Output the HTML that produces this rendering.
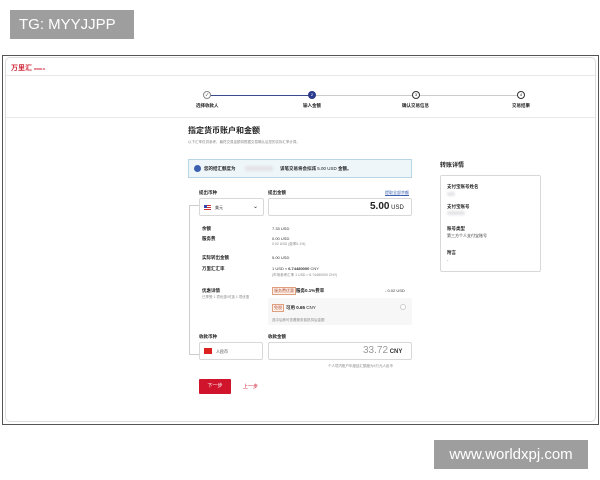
<!DOCTYPE html><html><head><meta charset="utf-8"><style>
*{margin:0;padding:0;box-sizing:border-box}
body{width:600px;height:480px;background:#fff;position:relative;overflow:hidden;font-family:"Liberation Sans","Noto Sans CJK SC",sans-serif;color:#222}
.a{position:absolute;white-space:nowrap}
.s{font-size:4px;color:#333}
.b{font-size:4.5px;font-weight:bold;color:#222}
.g{font-size:3.5px;color:#888}
.box{position:absolute;border:1px solid #d8d8d8;border-radius:2px;background:#fff}
.c{position:absolute;width:8px;height:8px;border-radius:50%;border:1px solid #333;background:#fff;font-size:4px;text-align:center;line-height:6px}
.blur{position:absolute;background:#e4e4e8;border-radius:2px;filter:blur(1px)}
</style></head><body>
<div class="a" style="left:10px;top:10px;width:124px;height:29px;background:#9e9e9e;color:#fff;font-size:15px;line-height:29px;padding-left:9px">TG: MYYJJPP</div>
<div class="a" style="left:434px;top:440px;width:154px;height:29px;background:#9e9e9e;color:#fff;font-size:15px;line-height:29px;text-align:center">www.worldxpj.com</div>
<div class="a" style="left:2px;top:55px;width:597px;height:370px;border:1px solid #555;background:#fff"></div>
<div class="a" style="left:5px;top:57px;width:591px;height:365px;border:1px solid #ddd;border-radius:5px;background:#fff"></div>
<div class="a" style="left:6px;top:75px;width:589px;height:1px;background:#e8e8e8"></div>
<div class="a" style="left:6px;top:117px;width:589px;height:1px;background:#e8e8e8"></div>
<div class="a" style="left:11px;top:63px;font-size:7px;color:#d0293a;font-weight:bold">万里汇 <span style="font-size:3px">WORLD<br></span></div>
<div class="a" style="left:207px;top:95px;width:105px;height:1px;background:#3a4a8c"></div>
<div class="a" style="left:312px;top:95px;width:209px;height:1px;background:#ccc"></div>
<div class="c" style="left:203px;top:91px;border-color:#888">✓</div>
<div class="c" style="left:308px;top:91px;background:#2a3a8c;border-color:#2a3a8c;color:#fff">2</div>
<div class="c" style="left:412px;top:91px">3</div>
<div class="c" style="left:517px;top:91px">4</div>
<div class="a b" style="left:196px;top:103px">选择收款人</div>
<div class="a b" style="left:303px;top:103px">输入金额</div>
<div class="a b" style="left:402px;top:103px">确认交易信息</div>
<div class="a b" style="left:512px;top:103px">交易结果</div>
<div class="a" style="left:188px;top:125px;font-size:8px;font-weight:bold">指定货币账户和金额</div>
<div class="a g" style="left:188px;top:140px">以下汇率仅供参考，最终交易金额将根据交易确认后您的实际汇率计算。</div>
<div class="a" style="left:188px;top:159px;width:224px;height:19px;border:1px solid #b9d6e6;background:#eef6fa"></div>
<div class="a" style="left:194px;top:165px;width:7px;height:7px;border-radius:50%;background:#3a5fb0"></div>
<div class="a b" style="left:204px;top:166px">您的结汇额度为</div>
<div class="blur" style="left:245px;top:166px;width:28px;height:5px"></div>
<div class="a b" style="left:280px;top:166px">该笔交易将会扣减 <span style="font-weight:normal">5.00 USD</span> 金额。</div>
<div class="a" style="left:440px;top:160px;font-size:6px;font-weight:bold">转账详情</div>
<div class="box" style="left:440px;top:175px;width:101px;height:97px"></div>
<div class="a b" style="left:447px;top:184px">支付宝账号姓名</div><div class="blur" style="left:447px;top:192px;width:8px;height:4px"></div>
<div class="a b" style="left:447px;top:204px">支付宝账号</div><div class="blur" style="left:447px;top:211px;width:18px;height:4px"></div>
<div class="a b" style="left:447px;top:226px">账号类型</div><div class="a s" style="left:447px;top:233px">第三方个人支付宝账号</div>
<div class="a b" style="left:447px;top:250px">附言</div><div class="a s" style="left:447px;top:257px">-</div>
<div class="a" style="left:189px;top:205px;width:10px;height:150px;border-left:1px solid #ccc;border-top:1px solid #ccc;border-bottom:1px solid #ccc"></div>
<div class="a b" style="left:199px;top:190px">提出币种</div>
<div class="a b" style="left:268px;top:190px">提出金额</div>
<div class="a" style="left:385px;top:190px;font-size:4px;color:#3a5fb0;text-decoration:underline">提取全部余额</div>
<div class="box" style="left:199px;top:198px;width:65px;height:18px"></div>
<div class="a" style="left:204px;top:205px;width:7px;height:5px;background:repeating-linear-gradient(#c33 0 1px,#fff 1px 2px)"><div style="width:3px;height:3px;background:#34a"></div></div>
<div class="a s" style="left:215px;top:205px">美元</div>
<div class="a" style="left:253px;top:203px;font-size:6px">⌄</div>
<div class="box" style="left:268px;top:198px;width:144px;height:18px"></div>
<div class="a" style="left:370px;top:201px;font-size:10px;font-weight:bold">5.00<span style="font-size:6px;font-weight:normal"> USD</span></div>
<div class="a b" style="left:202px;top:226px">余额</div><div class="a s" style="left:272px;top:226px">7.33 USD</div>
<div class="a b" style="left:202px;top:236px">服务费</div><div class="a s" style="left:272px;top:236px">0.00 USD</div><div class="a g" style="left:272px;top:242px">0.02 USD (费率0.1%)</div>
<div class="a b" style="left:202px;top:255px">实际转出金额</div><div class="a s" style="left:272px;top:255px">5.00 USD</div>
<div class="a b" style="left:202px;top:266px">万里汇汇率</div><div class="a s" style="left:272px;top:266px">1 USD ≈ <b>6.74480000</b> CNY</div><div class="a g" style="left:272px;top:273px">(市场参考汇率 1 USD ≈ 6.74480000 CNY)</div>
<div class="a b" style="left:202px;top:288px">优惠详情</div><div class="g a" style="left:202px;top:295px">已享受 1 项优惠/可选 1 项优惠</div>
<div class="a" style="left:272px;top:287px;font-size:4px;color:#b4523a;border:1px solid #e0a080;background:#fdf0e8;padding:0 1px">服务费优惠</div>
<div class="a b" style="left:296px;top:288px">服务0.1%费率</div><div class="a s" style="left:385px;top:288px">- 0.02 USD</div>
<div class="a" style="left:268px;top:298px;width:144px;height:27px;background:#f7f7f7;border-radius:2px"></div>
<div class="a" style="left:272px;top:304px;font-size:4px;color:#b4523a;border:1px solid #e0a080;background:#fdf0e8;padding:0 1px">免税</div>
<div class="a b" style="left:286px;top:305px">可用 0.65 <span style="font-weight:normal">CNY</span></div>
<div class="a" style="left:400px;top:304px;width:6px;height:6px;border-radius:50%;border:1px solid #ccc;background:#fff"></div>
<div class="a g" style="left:272px;top:318px">选中后即可查看服务费抵扣后金额</div>
<div class="a b" style="left:199px;top:334px">收款币种</div><div class="a b" style="left:268px;top:334px">收款金额</div>
<div class="box" style="left:199px;top:342px;width:64px;height:18px"></div>
<div class="a" style="left:204px;top:348px;width:8px;height:6px;background:#d22"></div>
<div class="a s" style="left:216px;top:349px">人民币</div>
<div class="box" style="left:268px;top:342px;width:144px;height:18px"></div>
<div class="a" style="left:363px;top:345px;font-size:10px;color:#999">33.72<span style="font-size:6px;color:#333;font-weight:bold"> CNY</span></div>
<div class="a g" style="left:328px;top:364px">个人境内账户年度结汇额度为5万元人民币</div>
<div class="a" style="left:199px;top:379px;width:32px;height:15px;background:#d0142c;border-radius:1px;color:#fff;font-size:5px;line-height:15px;text-align:center">下一步</div>
<div class="a" style="left:243px;top:383px;font-size:5px;color:#d0142c">上一步</div>
</body></html>
